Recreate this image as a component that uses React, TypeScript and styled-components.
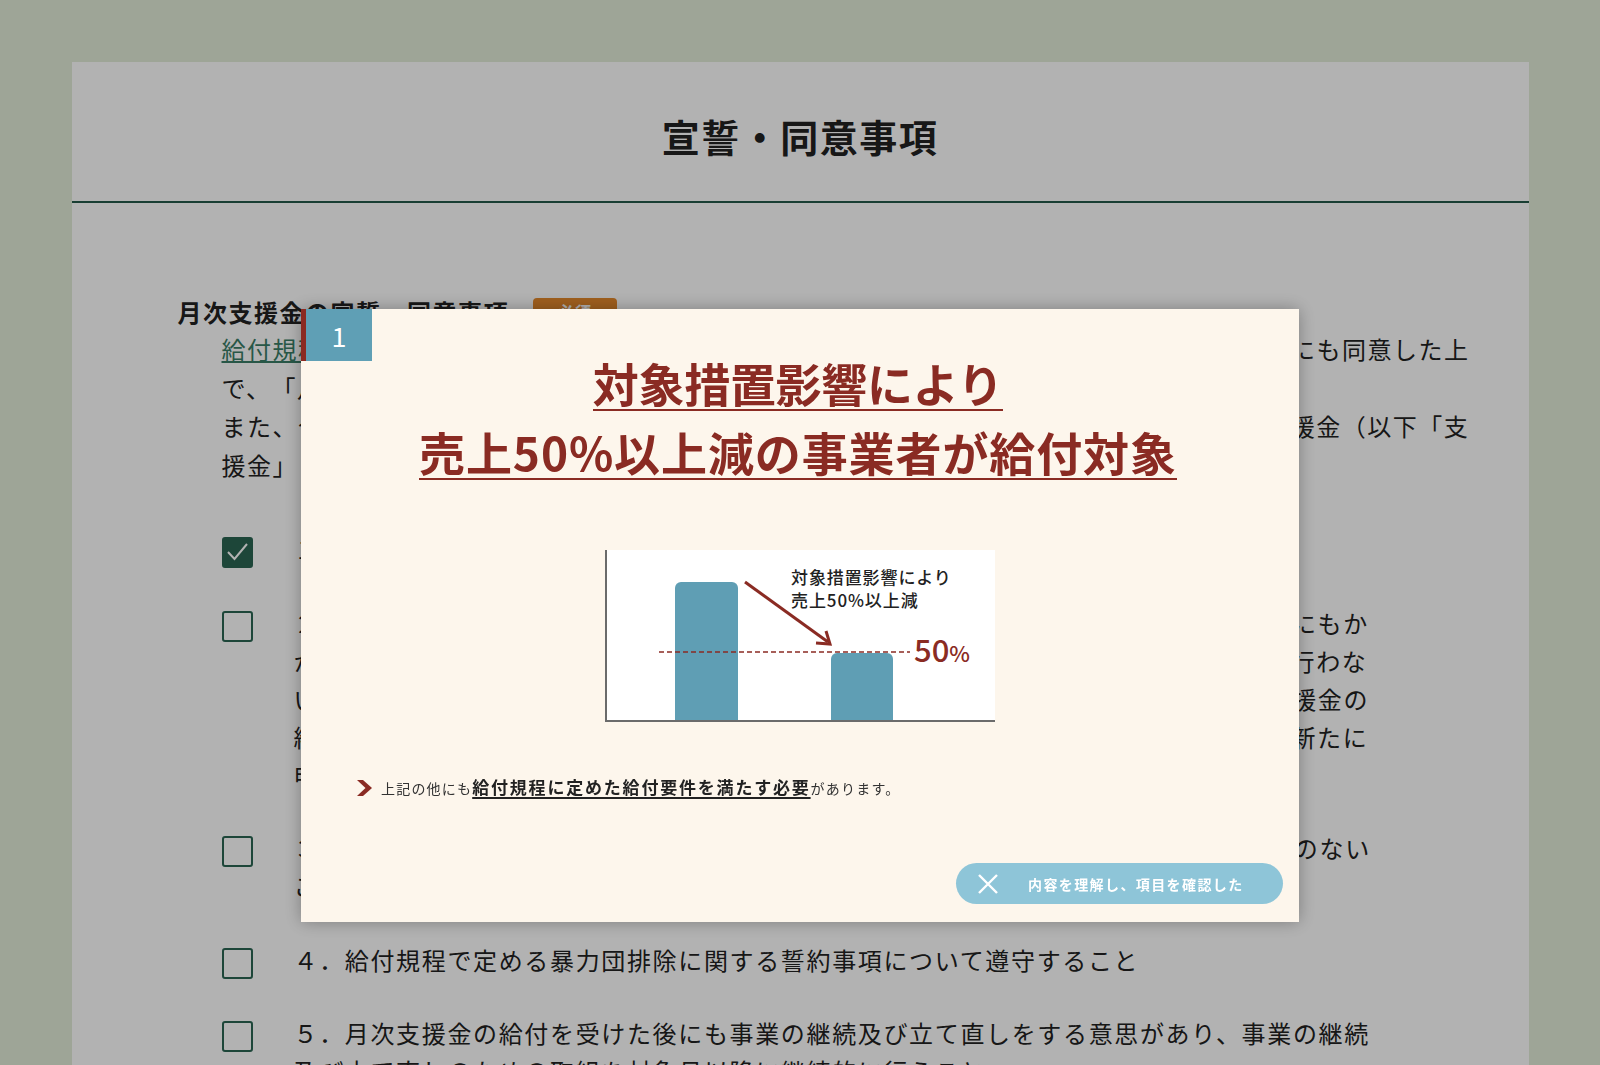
import React from "react";
import styled, { createGlobalStyle } from "styled-components";

const consentItems = [
  {
    checked: true,
    lines: ["１．給付規程に定める給付要件を全て満たしていること"],
  },
  {
    checked: false,
    lines: [
      "２．対象月において、国の緊急事態措置又はまん延防止等重点措置の影響を受けているにもか",
      "かわらず、自らの事業活動を継続するために必要な取組を行っていない等不正な申請を行わな",
      "いこと。また、申請に当たっては、これまでに既に給付を受けた一時支援金又は月次支援金の",
      "給付要件を満たさなくなった場合には、速やかに事務局に連絡し、その指示に従って、新たに",
      "申請等の手続きを行うこと。",
    ],
  },
  {
    checked: false,
    lines: [
      "３．不正受給が判明した場合には、給付金の全額返還及び加算金の支払い等に一切異議のない",
      "ことを誓約すること。",
    ],
  },
  {
    checked: false,
    lines: ["４．給付規程で定める暴力団排除に関する誓約事項について遵守すること"],
  },
  {
    checked: false,
    lines: [
      "５．月次支援金の給付を受けた後にも事業の継続及び立て直しをする意思があり、事業の継続",
      "及び立て直しのための取組を対象月以降に継続的に行うこと",
    ],
  },
];

const App = () => {
  return (
    <>
      <GlobalStyle />
      <Card>
        <PageHeader>
          <PageTitle>宣誓・同意事項</PageTitle>
        </PageHeader>

        <Content>
          <SectionHeading>
            月次支援金の宣誓・同意事項
            <Required>必須</Required>
          </SectionHeading>

          <Lead>
            <a href="#rules">給付規程</a>及び以下の宣誓・同意事項を確認し、宣誓事項について宣誓するとともに、同意事項にも同意した上
            <br />
            で、「月次支援金」の申請を行います。
            <br />
            また、今回の申請に当たっては、中小法人等向けの月次支援金又は個人事業者等向けの月次支援金（以下「支
            <br />
            援金」といいます。）の給付を受けるに当たり、次のとおり宣誓・同意します。
          </Lead>

          <ConsentList>
            {consentItems.map((item, i) => (
              <ConsentItem key={i}>
                <CheckBox $checked={item.checked}>
                  {item.checked && (
                    <svg width="27" height="27" viewBox="0 0 27 27">
                      <polyline
                        points="4,13 10.5,20 23,5"
                        fill="none"
                        stroke="#fff"
                        strokeWidth="2"
                      />
                    </svg>
                  )}
                </CheckBox>
                <ItemText>
                  {item.lines.map((line, j) => (
                    <React.Fragment key={j}>
                      {line}
                      {j < item.lines.length - 1 && <br />}
                    </React.Fragment>
                  ))}
                </ItemText>
              </ConsentItem>
            ))}
          </ConsentList>
        </Content>
      </Card>

      <Overlay>
        <Modal>
          <StepBadge>1</StepBadge>

          <Headline>
            <HeadlineLine $tight>対象措置影響により</HeadlineLine>
            <HeadlineLine>売上50%以上減の事業者が給付対象</HeadlineLine>
          </Headline>

          <ChartFigure>
            <svg width="390" height="172" viewBox="0 0 390 172">
              <rect width="390" height="172" fill="#fff" />
              <path
                d="M70 171 V38 a6 6 0 0 1 6 -6 H127 a6 6 0 0 1 6 6 V171 Z"
                fill="#5f9eb4"
              />
              <path
                d="M226 171 V109 a6 6 0 0 1 6 -6 H282 a6 6 0 0 1 6 6 V171 Z"
                fill="#5f9eb4"
              />
              <line
                x1="54"
                y1="102"
                x2="305"
                y2="102"
                stroke="#8a2b23"
                strokeWidth="1.6"
                strokeDasharray="5 3"
              />
              <line x1="140" y1="32" x2="223" y2="92" stroke="#8a2b23" strokeWidth="3" />
              <polyline
                points="211,93 225,94 221,81"
                fill="none"
                stroke="#8a2b23"
                strokeWidth="3"
              />
              <path d="M1 0 V171 H390" fill="none" stroke="#6b6b6b" strokeWidth="2" />
              <ChartLabel x="186" y="34">
                対象措置影響により
              </ChartLabel>
              <ChartLabel x="186" y="57">
                売上50%以上減
              </ChartLabel>
              <ChartValue x="309" y="112">
                <tspan fontSize="31">50</tspan>
                <tspan fontSize="22">%</tspan>
              </ChartValue>
            </svg>
          </ChartFigure>

          <Note>
            <svg width="15" height="16" viewBox="0 0 15 16">
              <polygon points="0,0 6,0 15,8 6,16 0,16 8.5,8" fill="#8a2b23" />
            </svg>
            <span>
              上記の他にも<strong>給付規程に定めた給付要件を満たす必要</strong>があります。
            </span>
          </Note>

          <ModalFooter>
            <ConfirmButton type="button">
              <svg width="20" height="20" viewBox="0 0 20 20">
                <path d="M1 1 L19 19 M19 1 L1 19" stroke="#fff" strokeWidth="2.4" />
              </svg>
              内容を理解し、項目を確認した
            </ConfirmButton>
          </ModalFooter>
        </Modal>
      </Overlay>
    </>
  );
};

export default App;

const GlobalStyle = createGlobalStyle`
  * {
    box-sizing: border-box;
  }
  html, body {
    margin: 0;
    padding: 0;
    overflow: hidden;
  }
  body {
    background-color: #e2ecd9;
    font-family: "Noto Sans CJK JP", "Noto Sans", sans-serif;
    color: #222;
    text-spacing-trim: space-all;
  }
`;

const Card = styled.main`
  width: 1457px;
  min-height: 1100px;
  margin: 62px auto 0;
  background-color: #ffffff;
`;

const PageHeader = styled.header`
  padding: 55px 0 46px;
  border-bottom: 2px solid #25594a;
  text-align: center;
`;

const PageTitle = styled.h1`
  margin: 0;
  font-size: 38px;
  line-height: 38px;
  font-weight: 700;
  letter-spacing: 0.04em;
`;

const Content = styled.section`
  padding: 89px 0 0 106px;
`;

const SectionHeading = styled.h2`
  display: flex;
  align-items: center;
  gap: 24px;
  margin: 0;
  font-size: 24px;
  line-height: 39px;
  font-weight: 700;
  letter-spacing: 1.5px;
`;

const Required = styled.span`
  display: inline-flex;
  align-items: center;
  justify-content: center;
  width: 84px;
  height: 28px;
  border-radius: 4px;
  background-color: #e5892c;
  color: #fff;
  font-size: 16px;
`;

const Lead = styled.p`
  margin: -1px 0 46px 44px;
  font-size: 24px;
  line-height: 38.5px;
  letter-spacing: 1.5px;
  white-space: nowrap;

  a {
    color: #3a7d66;
    text-decoration: underline;
  }
`;

const ConsentList = styled.ul`
  display: flex;
  flex-direction: column;
  gap: 35.5px;
  list-style: none;
  margin: 0 0 0 44px;
  padding: 0;
`;

const ConsentItem = styled.li`
  display: grid;
  grid-template-columns: 31px 1fr;
  align-items: start;
  column-gap: 41px;
  font-size: 24px;
  line-height: 38px;
  letter-spacing: 1.65px;
`;

const CheckBox = styled.span<{ $checked?: boolean }>`
  display: flex;
  align-items: center;
  justify-content: center;
  width: 31px;
  height: 31px;
  margin-top: 7px;
  border: 2px solid #2a6552;
  border-radius: 3px;
  background-color: ${(p) => (p.$checked ? "#2a6552" : "transparent")};
`;

const ItemText = styled.span`
  white-space: nowrap;
`;

const Overlay = styled.div`
  position: fixed;
  inset: 0;
  display: flex;
  justify-content: center;
  align-items: flex-start;
  padding-top: 309px;
  background-color: rgba(0, 0, 0, 0.3);
`;

const Modal = styled.div`
  position: relative;
  display: flex;
  flex-direction: column;
  align-items: center;
  width: 998px;
  height: 613px;
  padding: 50px 16px 18px;
  background-color: #fdf6ec;
  box-shadow: 0 0 16px rgba(0, 0, 0, 0.3);
`;

const StepBadge = styled.span`
  position: absolute;
  top: 0;
  left: 0;
  display: flex;
  align-items: center;
  justify-content: center;
  width: 71px;
  height: 52px;
  border-left: 5px solid #8b2a22;
  background-color: #5f9fb5;
  color: #fff;
  font-size: 27px;
  font-weight: 400;
`;

const Headline = styled.h3`
  display: flex;
  flex-direction: column;
  align-items: center;
  gap: 17px;
  margin: 0 4px 0 0;
  color: #8a2b23;
  font-size: 46px;
  line-height: 46px;
  font-weight: 700;
`;

const HeadlineLine = styled.span<{ $tight?: boolean }>`
  padding-bottom: 4px;
  border-bottom: 2px solid #8a2b23;
  letter-spacing: ${(p) => (p.$tight ? "-0.3px" : "0.9px")};
`;

const ChartFigure = styled.figure`
  width: 390px;
  height: 172px;
  margin: 70px 0 0;

  svg {
    display: block;
  }
`;

const ChartLabel = styled.text`
  font-size: 17px;
  font-weight: 500;
  letter-spacing: 0.9px;
  fill: #222;
`;

const ChartValue = styled.text`
  font-weight: 500;
  fill: #8a2b23;
`;

const Note = styled.p`
  align-self: stretch;
  display: flex;
  align-items: center;
  gap: 9px;
  margin: 55px 0 0;
  padding-left: 40px;
  font-size: 14px;
  line-height: 20px;
  letter-spacing: 1.2px;
  color: #333;

  strong {
    font-size: 17px;
    font-weight: 700;
    letter-spacing: 1.8px;
    color: #222;
    text-decoration: underline;
    text-decoration-thickness: 1.5px;
    text-underline-offset: 3px;
  }
`;

const ModalFooter = styled.div`
  align-self: stretch;
  display: flex;
  justify-content: flex-end;
  margin-top: auto;
`;

const ConfirmButton = styled.button`
  display: flex;
  align-items: center;
  gap: 30px;
  width: 327px;
  height: 41px;
  padding: 0 0 0 22px;
  border: none;
  border-radius: 21px;
  background-color: #8ec5d8;
  color: #fff;
  font-family: inherit;
  font-size: 14px;
  font-weight: 700;
  letter-spacing: 0.1em;
  cursor: pointer;
`;
